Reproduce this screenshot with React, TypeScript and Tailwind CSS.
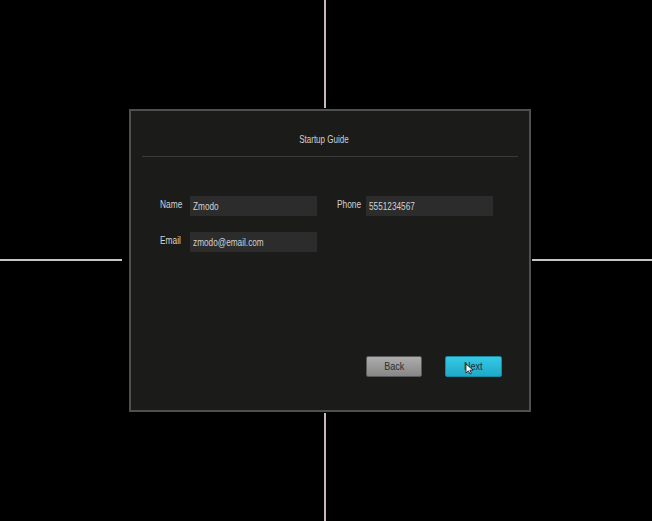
import React from 'react';

// condensed look of the DVR's UI font
const Cond = ({ children, origin = 'origin-left', scale = 'scale-x-[0.76]' }: { children: React.ReactNode; origin?: string; scale?: string }) => (
  <span className={`inline-block whitespace-nowrap ${origin} ${scale}`}>{children}</span>
);

function Field({ label, value, labelW }: { label: string; value: string; labelW: string }) {
  return (
    <div className="flex items-center">
      <span className={`${labelW} text-[11px] text-[#d2d2d2] -mt-[3px]`}>
        <Cond>{label}</Cond>
      </span>
      <div className="w-[127px] h-[20px] bg-[#2b2c2b] flex items-center pl-[3px] text-[11px] text-[#d0d0d0] overflow-hidden">
        <Cond scale="scale-x-[0.75]">{value}</Cond>
      </div>
    </div>
  );
}

function Pointer() {
  return (
    <svg className="absolute left-[19px] top-[6px]" width="9" height="12" viewBox="0 0 9 12">
      <path d="M1 1 L1 10 L3.4 7.8 L5 11 L6.4 10.3 L4.9 7.2 L8 7.1 Z" fill="#ffffff" stroke="#111" strokeWidth="0.8" />
    </svg>
  );
}

export default function App() {
  return (
    <div
      className="relative w-[652px] h-[521px] bg-black overflow-hidden"
      style={{ fontFamily: '"Liberation Sans", Arial, sans-serif' }}
    >
      {/* crosshair lines behind the dialog */}
      <div className="absolute left-[324px] top-0 w-[2px] h-[108px] bg-[#c9b8bb]" />
      <div className="absolute left-[324px] top-[413px] w-[2px] h-[108px] bg-[#c9b8bb]" />
      <div className="absolute left-0 top-[259px] w-[122px] h-[2px] bg-[#c9c4c4]" />
      <div className="absolute left-[532px] top-[259px] w-[120px] h-[2px] bg-[#c9c4c4]" />

      <div className="pt-[109px] pl-[129px]">
        <div className="w-[402px] h-[303px] bg-[#1b1c1a] border-2 border-[#4d504d] flex flex-col">
          <div className="h-[45px] flex items-center justify-center pt-[11px] pr-[12px] text-[11px] text-[#cfcfcf]">
            <Cond origin="origin-center" scale="scale-x-[0.73]">Startup Guide</Cond>
          </div>
          <div className="mx-[11px] h-px bg-[#3a3c3a]" />

          <div className="pl-[29px] pt-[39px] flex flex-col gap-[16px]">
            <div className="flex gap-[20px]">
              <Field label="Name" value="Zmodo" labelW="w-[30px]" />
              <Field label="Phone" value="5551234567" labelW="w-[29px]" />
            </div>
            <Field label="Email" value="zmodo@email.com" labelW="w-[30px]" />
          </div>

          <div className="mt-auto mb-[33px] flex justify-end gap-[23px] pr-[27px]">
            <div className="w-[56px] h-[21px] rounded-[2px] border border-[#5a5a5a] bg-gradient-to-b from-[#adadad] to-[#878787] flex items-center justify-center text-[11px] text-[#2e2e2e]">
              <Cond origin="origin-center" scale="scale-x-[0.82]">Back</Cond>
            </div>
            <div className="relative w-[57px] h-[21px] rounded-[2px] border border-[#1a8aa3] bg-gradient-to-b from-[#35c9e4] to-[#1fa9c9] flex items-center justify-center text-[11px] text-[#1a2a30]">
              <Cond origin="origin-center" scale="scale-x-[0.82]">Next</Cond>
              <Pointer />
            </div>
          </div>
        </div>
      </div>
    </div>
  );
}
